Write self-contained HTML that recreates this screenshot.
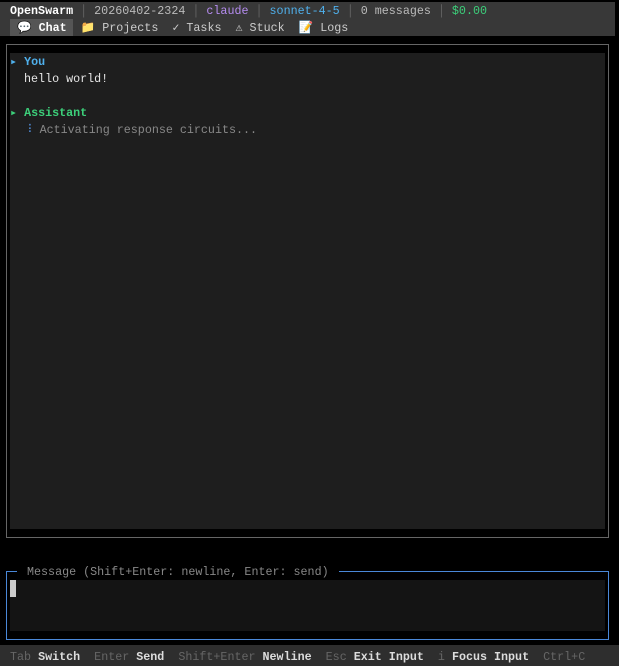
<!DOCTYPE html>
<html><head><style>
*{margin:0;padding:0;box-sizing:border-box}
body{width:619px;height:666px;background:#000;font-family:"Liberation Mono",monospace;font-size:11.7px;color:#ddd;position:relative;overflow:hidden}
.a{position:absolute;white-space:pre;line-height:17px}
.sep{color:#666}
</style></head><body>
<div style="position:absolute;left:0;top:2px;width:615px;height:34px;background:#383838"></div>
<div style="position:absolute;left:10px;top:19px;width:63px;height:17px;background:#555"></div>
<div class="a" style="left:10px;top:3px"><b style="color:#fff">OpenSwarm</b> <span class="sep">│</span> <span style="color:#bbb">20260402-2324</span> <span class="sep">│</span> <span style="color:#b58cf0">claude</span> <span class="sep">│</span> <span style="color:#4fb0ec">sonnet-4-5</span> <span class="sep">│</span> <span style="color:#bbb">0 messages</span> <span class="sep">│</span> <span style="color:#3ccf7a">$0.00</span></div>
<div class="a" style="left:17px;top:20px;color:#ccc"><b style="color:#fff">💬 Chat</b>  📁 Projects  ✓ Tasks  ⚠ Stuck  📝 Logs</div>
<div style="position:absolute;left:6px;top:44px;width:603px;height:494px;border:1px solid #666"></div>
<div style="position:absolute;left:10px;top:53px;width:595px;height:476px;background:#1e1e1e"></div>
<div class="a" style="left:10px;top:54px"><span style="color:#4fb0ec">▸ <b>You</b></span>
  <span style="color:#e6e6e6">hello world!</span>

<span style="color:#3ccf7a">▸ <b>Assistant</b></span>
  <span style="color:#4a7ec0">⠸</span> <span style="color:#888">Activating response circuits...</span></div>
<div style="position:absolute;left:6px;top:571px;width:603px;height:69px;border:1px solid #4a88d8"></div>
<div style="position:absolute;left:10px;top:580px;width:595px;height:51px;background:#141414"></div>
<div class="a" style="left:17px;top:565px;line-height:14px;background:#000;color:#888;padding:0 3px"> Message (Shift+Enter: newline, Enter: send) </div>
<div style="position:absolute;left:10px;top:580px;width:6px;height:17px;background:#ccc"></div>
<div style="position:absolute;left:0;top:645px;width:619px;height:21px;background:#2e2e2e"></div>
<div class="a" style="left:10px;top:649px;color:#666">Tab <b style="color:#ddd">Switch</b>  Enter <b style="color:#ddd">Send</b>  Shift+Enter <b style="color:#ddd">Newline</b>  Esc <b style="color:#ddd">Exit Input</b>  i <b style="color:#ddd">Focus Input</b>  Ctrl+C</div>
</body></html>
